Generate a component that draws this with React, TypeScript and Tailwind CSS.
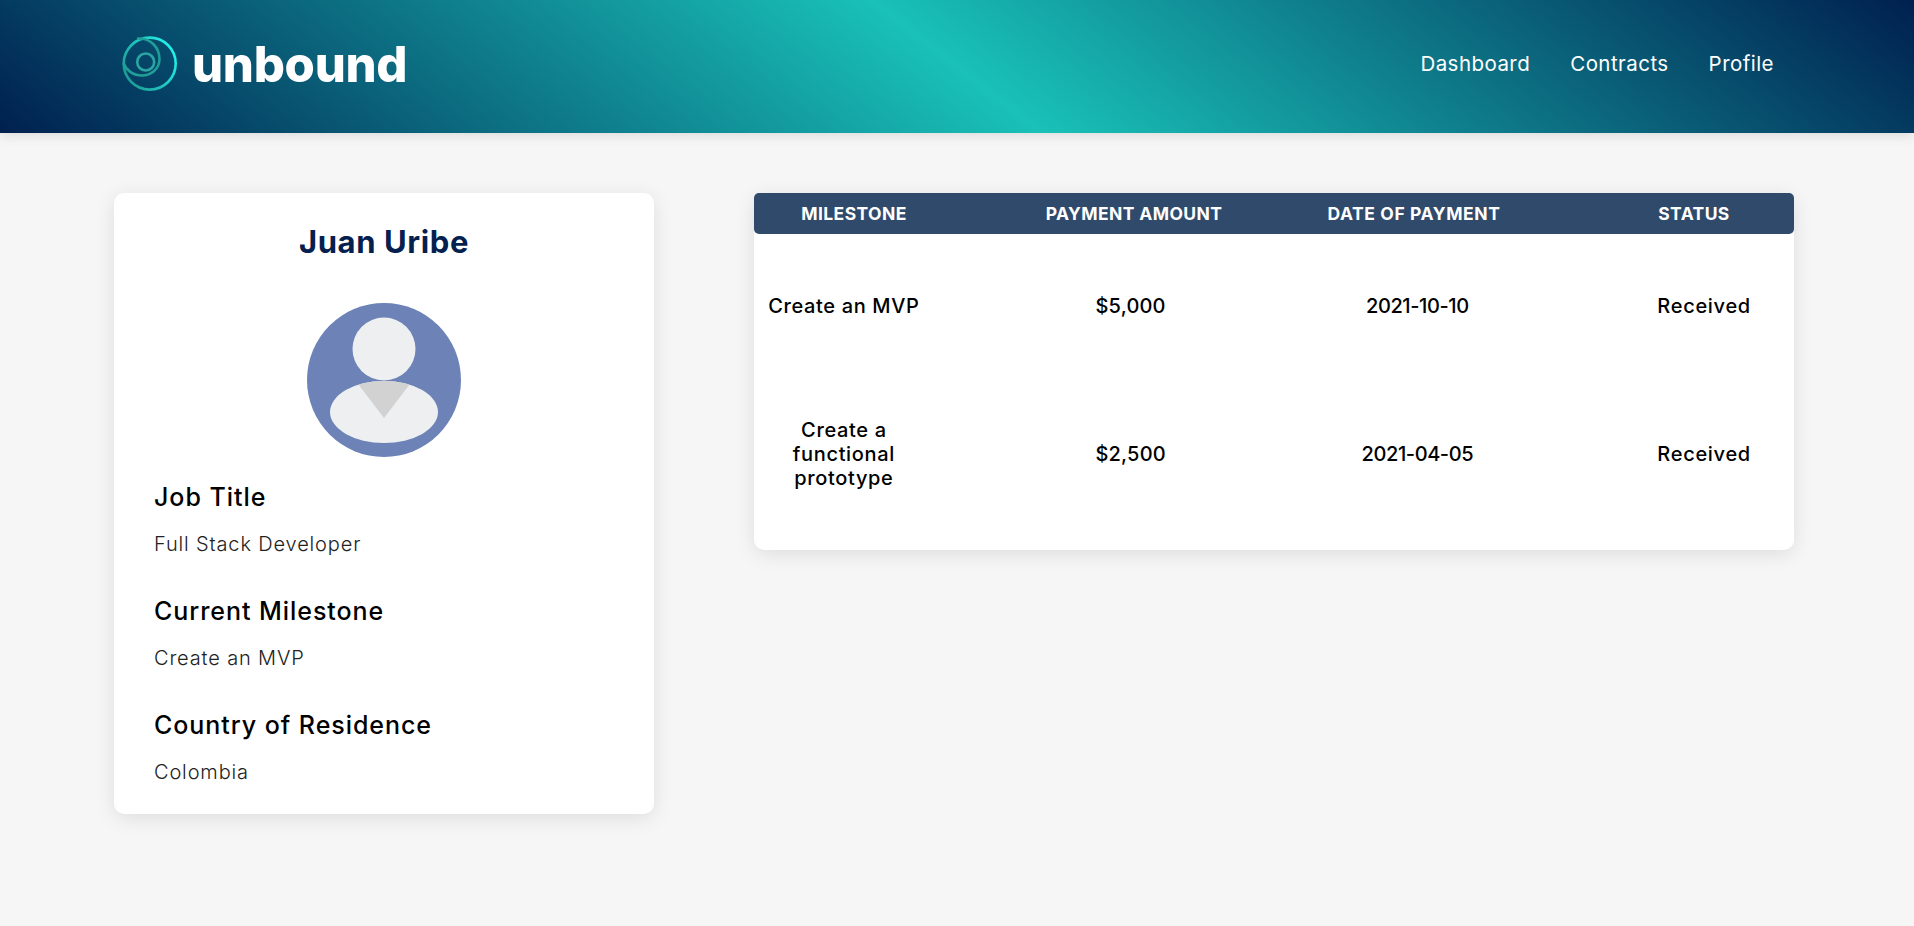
import React from "react";

function Logo() {
  return (
    <svg width="58" height="58" viewBox="0 0 58 58" fill="none" className="shrink-0">
      <defs>
        <linearGradient id="lg" x1="0" y1="1" x2="1" y2="0.4">
          <stop offset="0" stopColor="#1b8f88" />
          <stop offset="1" stopColor="#22ece6" />
        </linearGradient>
      </defs>
      <circle cx="28.7" cy="28.6" r="26" stroke="url(#lg)" strokeWidth="2.6" />
      <path d="M16 3.5 C30 2.5 38.5 13 38.5 24 C38.5 34 30 40.5 21 40.5 C12 40.5 5 35 2.5 28" stroke="#1f9f98" strokeWidth="2.5" />
      <circle cx="24.7" cy="27" r="8.5" stroke="#2aa5a4" strokeWidth="2.6" />
    </svg>
  );
}

function Avatar() {
  return (
    <svg width="156" height="156" viewBox="0 0 156 156" className="block">
      <defs>
        <clipPath id="body"><ellipse cx="78" cy="110" rx="54" ry="31" /></clipPath>
      </defs>
      <circle cx="78" cy="78" r="77" fill="#6d83b8" />
      <circle cx="78" cy="47" r="31.5" fill="#edeff1" />
      <ellipse cx="78" cy="110" rx="54" ry="31" fill="#edeff1" />
      <polygon points="49,78 107,78 78,116" fill="#d2d2d2" clipPath="url(#body)" />
    </svg>
  );
}

function Field({ title, value }: { title: string; value: string }) {
  return (
    <div className="flex flex-col">
      <h3 className="text-[25px] leading-[30px] font-[550] text-black tracking-[0.95px]">{title}</h3>
      <p className="mt-[17px] text-[20px] leading-[30px] font-light text-[#222] tracking-[0.85px]">{value}</p>
    </div>
  );
}

const rows = [
  { m: "Create an MVP", a: "$5,000", d: "2021-10-10", s: "Received" },
  { m: "Create a functional prototype", a: "$2,500", d: "2021-04-05", s: "Received" },
];

export default function App() {
  return (
    <div className="min-h-[926px] bg-[#f6f6f6] font-['Inter','Noto_Sans',sans-serif]">
      <header className="h-[133px] flex items-center justify-between pl-[121px] pr-[140px] pb-[5px] bg-[linear-gradient(38deg,#00204f_0%,#19c1b8_50%,#00204f_100%)] shadow-[0_2px_12px_rgba(0,0,0,0.12)]">
        <div className="flex items-center gap-[13px]">
          <Logo />
          <span className="text-[49px] leading-none font-extrabold text-white tracking-[-0.3px]">unbound</span>
        </div>
        <nav className="flex items-center gap-[40px] text-[20.5px] text-white tracking-[0.45px]">
          <span>Dashboard</span>
          <span>Contracts</span>
          <span>Profile</span>
        </nav>
      </header>

      <main className="flex items-start pt-[60px] pl-[114px] gap-[100px]">
        <section className="w-[540px] h-[621px] bg-white rounded-[10px] shadow-[0_4px_20px_rgba(0,0,0,0.1)] px-[40px] pt-[31px] flex flex-col">
          <h2 className="text-center text-[31px] leading-[36px] font-bold text-[#04204f] tracking-[0.6px]">Juan Uribe</h2>
          <div className="flex justify-center mt-[42px]"><Avatar /></div>
          <div className="mt-[24px] flex flex-col gap-[37px]">
            <Field title="Job Title" value="Full Stack Developer" />
            <Field title="Current Milestone" value="Create an MVP" />
            <Field title="Country of Residence" value="Colombia" />
          </div>
        </section>

        <section className="w-[1040px] h-[357px] bg-white rounded-[10px] shadow-[0_4px_20px_rgba(0,0,0,0.1)]">
          <div className="h-[41px] pt-[2px] rounded-[5px] bg-[#2f4a6b] grid grid-cols-4 gap-x-[80px] items-center text-center text-[17.5px] font-bold text-white tracking-[0.4px] whitespace-nowrap">
            <span>MILESTONE</span>
            <span>PAYMENT AMOUNT</span>
            <span className="tracking-[0.6px]">DATE OF PAYMENT</span>
            <span>STATUS</span>
          </div>
          {rows.map((r) => (
            <div key={r.d} className="h-[148px] pb-[4px] grid grid-cols-4 gap-x-[107px] items-center text-center text-[20px] leading-[24px] font-[480] text-black">
              <span className="tracking-[0.65px] -mx-[4px] px-[8px]">{r.m}</span>
              <span className="tracking-[0.2px]">{r.a}</span>
              <span className="tracking-[-0.4px]">{r.d}</span>
              <span className="tracking-[0.7px]">{r.s}</span>
            </div>
          ))}
        </section>
      </main>
    </div>
  );
}
